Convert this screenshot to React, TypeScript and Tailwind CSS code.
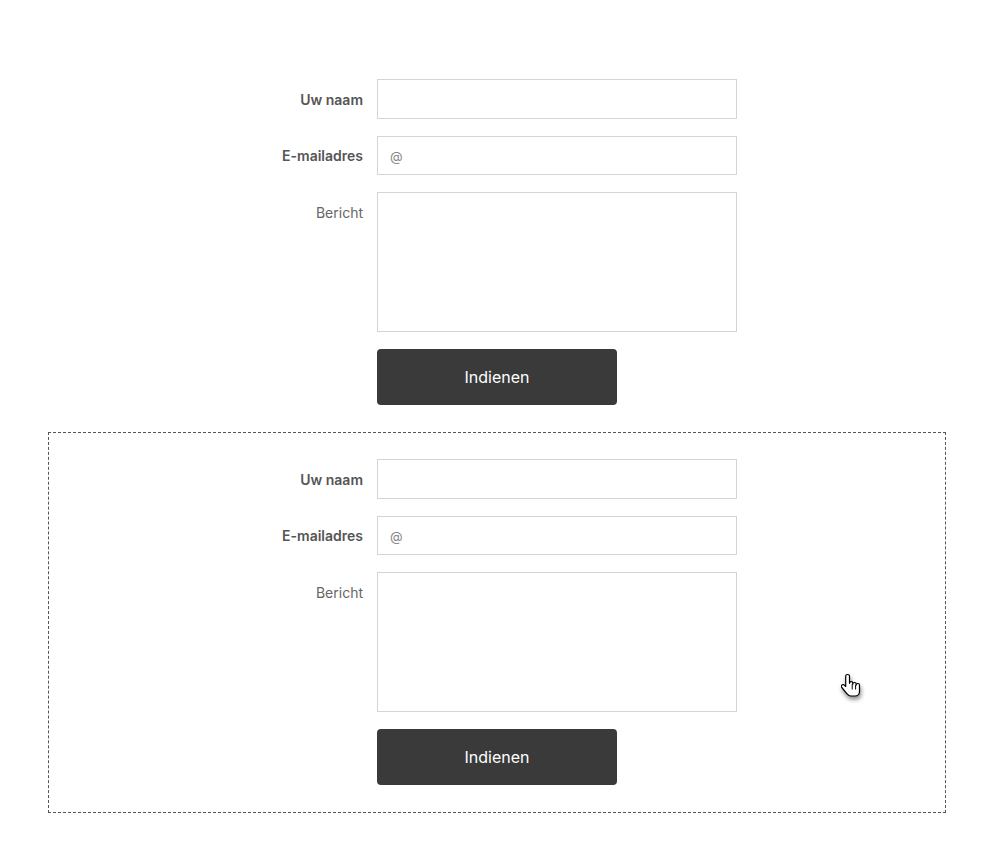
import React from 'react';

const ContactForm: React.FC = () => {
  return (
    <div className="mx-auto w-[480px]">
      <div className="flex items-center mb-[17px]">
        <label className="w-[120px] pr-[14px] text-right text-[14px] font-semibold text-[#555555]">Uw naam</label>
        <input
          type="text"
          className="w-[360px] h-10 border border-[#d4d4d4] bg-white px-3 text-[14px] text-[#555555] outline-none"
        />
      </div>
      <div className="flex items-center mb-[17px]">
        <label className="w-[120px] pr-[14px] text-right text-[14px] font-semibold text-[#555555]">E-mailadres</label>
        <input
          type="email"
          placeholder="@"
          className="w-[360px] h-[39px] border border-[#d4d4d4] bg-white px-3 text-[13px] text-[#555555] placeholder:text-[#8a8a8a] outline-none"
        />
      </div>
      <div className="flex items-start mb-[17px]">
        <label className="w-[120px] pr-[14px] pt-[10px] text-right text-[14px] text-[#666666]">Bericht</label>
        <textarea className="w-[360px] h-[140px] resize-none border border-[#d4d4d4] bg-white px-3 py-2 text-[14px] outline-none" />
      </div>
      <div className="flex">
        <div className="w-[120px]" />
        <button className="w-[240px] h-14 rounded-[4px] bg-[#3a3a3a] text-[16px] text-white">Indienen</button>
      </div>
    </div>
  );
};

const HandCursor: React.FC = () => (
  <svg
    className="absolute left-[841px] top-[673px] drop-shadow-[1px_3px_2px_rgba(0,0,0,0.45)]"
    width="22"
    height="28"
    viewBox="0 0 22 28"
  >
    <path
      d="M6.5 1.5c-1 0-1.8.8-1.8 1.8v10.2l-1.3-1.3c-.8-.8-2-.8-2.6 0-.6.6-.6 1.6 0 2.3l4.6 5.6c1.2 1.5 2.4 2.9 4.4 2.9h4.3c2.6 0 4.4-2 4.4-4.6v-6.2c0-1-.8-1.7-1.7-1.7s-1.6.7-1.6 1.6v-.9c0-1-.8-1.7-1.7-1.7s-1.7.7-1.7 1.7v-.8c0-1-.8-1.7-1.700-1.700s-1.6.7-1.6 1.6V3.3c0-1-.8-1.8-1.8-1.8z"
      fill="#ffffff"
      stroke="#000000"
      strokeWidth="1.2"
      strokeLinejoin="round"
    />
    <path d="M11.2 11v5.5M14.6 11.8v4.7" stroke="#000000" strokeWidth="1" />
  </svg>
);

const App: React.FC = () => {
  return (
    <div
      className="relative min-h-[847px] bg-white pl-[48px] pr-[45px] pt-[52px]"
      style={{ fontFamily: 'Inter, "Open Sans", sans-serif' }}
    >
      <div className="border border-transparent pt-[26px] pb-[26px]">
        <ContactForm />
      </div>
      <div className="border border-dashed border-[#555555] pt-[26px] pb-[27px]">
        <ContactForm />
      </div>
      <HandCursor />
    </div>
  );
};

export default App;
